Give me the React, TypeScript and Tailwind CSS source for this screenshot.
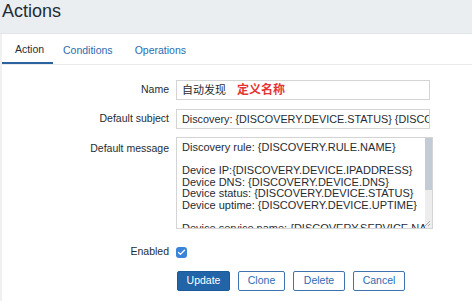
import { Check } from "lucide-react";

const font = { fontFamily: '"Liberation Sans", Arial, "Noto Sans CJK SC", sans-serif' };

const messageLines = [
  "Discovery rule: {DISCOVERY.RULE.NAME}",
  "",
  "Device IP:{DISCOVERY.DEVICE.IPADDRESS}",
  "Device DNS: {DISCOVERY.DEVICE.DNS}",
  "Device status: {DISCOVERY.DEVICE.STATUS}",
  "Device uptime: {DISCOVERY.DEVICE.UPTIME}",
  "",
  "Device service name: {DISCOVERY.SERVICE.NAME}",
];

function Label({ children }: { children: React.ReactNode }) {
  return <div className="w-[167px] shrink-0 text-right text-[10.5px] text-[#1f2c33]">{children}</div>;
}

export default function App() {
  return (
    <div className="w-[472px] h-[301px] overflow-hidden bg-white" style={font}>
      <div className="h-[34px] bg-[#ebeef0] border-b border-[#e2e5e8] pl-[2px]">
        <h1 className="text-[18px] leading-[20px] text-[#1f2c33] pt-[1px]">Actions</h1>
      </div>

      <div className="border-l-2 border-[#eef0f1] h-full">
        <div className="flex items-end h-[31px] border-b border-[#e8eaeb] text-[10.5px]">
          <div className="w-[51px] h-full flex items-center justify-center text-[#1f2c33] border-b-2 border-[#2a63a0] pl-[4px] pt-[3px]">Action</div>
          <div className="h-full flex items-center ml-[10px] text-[#2b6cb2] pt-[3px]">Conditions</div>
          <div className="h-full flex items-center ml-[22px] text-[#2b6cb2] pt-[3px]">Operations</div>
        </div>

        <div className="pt-[15px] flex flex-col">
          <div className="flex items-center gap-[7px]">
            <Label>Name</Label>
            <div className="w-[254px] h-[20px] border border-[#d4d4d4] flex items-center px-[5px] text-[11px] text-[#1f2c33]">
              自动发现
              <span className="ml-[11px] text-[12px] font-bold text-[#e53434]">定义名称</span>
            </div>
          </div>

          <div className="flex items-center gap-[7px] mt-[9px]">
            <Label>Default subject</Label>
            <div className="w-[254px] h-[20px] border border-[#d4d4d4] flex items-center px-[5px] text-[10.8px] text-[#1f2c33] overflow-hidden whitespace-nowrap">
              Discovery: {"{DISCOVERY.DEVICE.STATUS}"} {"{DISCOVERY.DEVICE.IPADDRESS}"}
            </div>
          </div>

          <div className="flex items-start gap-[7px] mt-[8px]">
            <div className="pt-[4px]"><Label>Default message</Label></div>
            <div className="relative w-[257px] h-[92px] border border-[#d4d4d4] overflow-hidden flex">
              <div className="flex-1 px-[5px] pt-[4px] text-[11px] leading-[11.5px] text-[#1f2c33] whitespace-nowrap overflow-hidden">
                {messageLines.map((l, i) => (
                  <div key={i} className="h-[11.5px]">{l}</div>
                ))}
              </div>
              <div className="w-[7px] bg-[#ededed] flex flex-col">
                <div className="h-[52px] bg-[#c3ccd5]" />
              </div>
              <svg className="absolute right-[1px] bottom-[1px]" width="7" height="7" viewBox="0 0 7 7">
                <path d="M6 1 L1 6 M6 4 L4 6" stroke="#9a9a9a" strokeWidth="0.8" />
              </svg>
            </div>
          </div>

          <div className="flex items-center gap-[7px] mt-[17px] h-[12px]">
            <Label>Enabled</Label>
            <div className="w-[11px] h-[11px] rounded-[3px] bg-[#3b83d8] flex items-center justify-center">
              <Check size={9} strokeWidth={3.5} color="white" />
            </div>
          </div>

          <div className="flex gap-[8px] ml-[175px] mt-[13px] text-[10.5px]">
            <button className="w-[53px] h-[20px] bg-[#2264a8] border border-[#1b5a99] text-white rounded-[2px]">Update</button>
            <button className="w-[47px] h-[20px] bg-white border border-[#3e73ad] text-[#2b6cb2] rounded-[2px]">Clone</button>
            <button className="w-[52px] h-[20px] bg-white border border-[#3e73ad] text-[#2b6cb2] rounded-[2px]">Delete</button>
            <button className="w-[52px] h-[20px] bg-white border border-[#3e73ad] text-[#2b6cb2] rounded-[2px]">Cancel</button>
          </div>
        </div>
      </div>
    </div>
  );
}
